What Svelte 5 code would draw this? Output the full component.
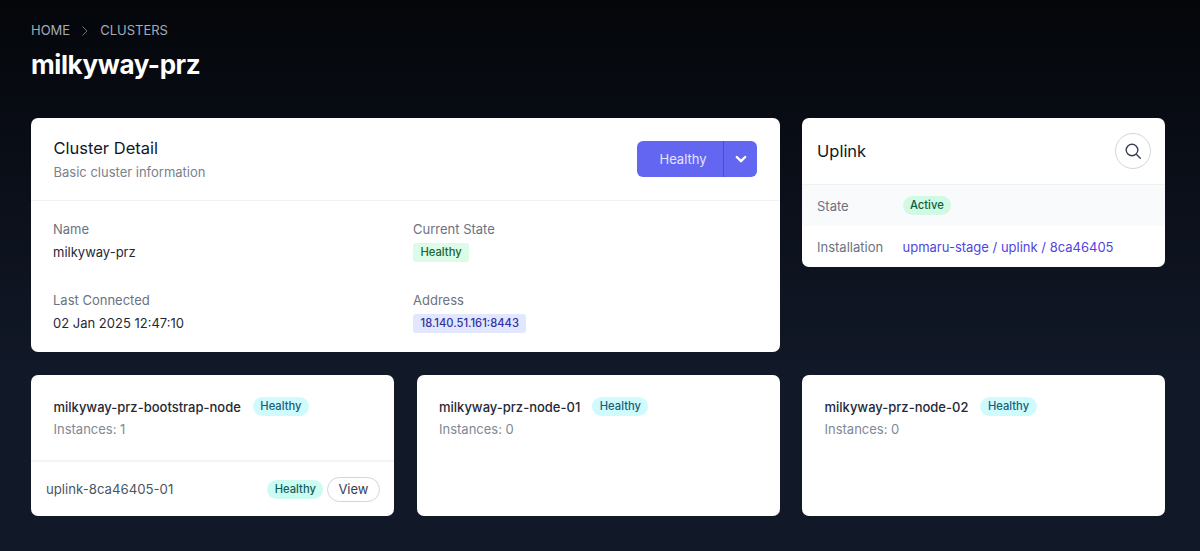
<script>
  const nodes = [
    { name: 'milkyway-prz-bootstrap-node', count: 1, instance: 'uplink-8ca46405-01' },
    { name: 'milkyway-prz-node-01', count: 0 },
    { name: 'milkyway-prz-node-02', count: 0 }
  ];
</script>

<div class="page">
  <nav class="crumbs">
    <span>HOME</span>
    <svg width="8" height="12" viewBox="0 0 8 12" fill="none" stroke="#6b7280" stroke-width="1"><path d="M1.500 1.500 6 6l-4.500 4.500" /></svg>
    <span>CLUSTERS</span>
  </nav>
  <h1>milkyway-prz</h1>

  <div class="grid">
    <section class="card detail">
      <header class="detail-head">
        <div>
          <h2>Cluster Detail</h2>
          <p>Basic cluster information</p>
        </div>
        <div class="split">
          <span class="split-label">Healthy</span>
          <span class="split-arrow">
            <svg width="14" height="14" viewBox="0 0 14 14" fill="none" stroke="#fff" stroke-width="2.400" stroke-linecap="round" stroke-linejoin="round"><path d="M2.800 5 7 9.200 11.200 5" /></svg>
          </span>
        </div>
      </header>
      <div class="fields">
        <div class="field">
          <div class="label">Name</div>
          <div class="value">milkyway-prz</div>
        </div>
        <div class="field">
          <div class="label">Current State</div>
          <span class="tag green">Healthy</span>
        </div>
        <div class="field">
          <div class="label">Last Connected</div>
          <div class="value">02 Jan 2025 12:47:10</div>
        </div>
        <div class="field">
          <div class="label">Address</div>
          <span class="tag indigo">18.140.51.161:8443</span>
        </div>
      </div>
    </section>

    <section class="card uplink">
      <header class="uplink-head">
        <h2>Uplink</h2>
        <span class="search">
          <svg width="18" height="18" viewBox="0 0 18 18" fill="none" stroke="#374151" stroke-width="1.400" stroke-linecap="round"><circle cx="8" cy="8" r="5.800" /><path d="m12.300 12.300 4 4" /></svg>
        </span>
      </header>
      <div class="row shaded">
        <span class="row-label">State</span>
        <span class="pill emerald">Active</span>
      </div>
      <div class="row">
        <span class="row-label">Installation</span>
        <span class="link">upmaru-stage / uplink / 8ca46405</span>
      </div>
    </section>

    {#each nodes as node}
      <section class="card node">
        <div class="node-head">
          <div class="node-title">
            <span class="node-name">{node.name}</span>
            <span class="pill cyan">Healthy</span>
          </div>
          <div class="node-count">Instances: {node.count}</div>
        </div>
        {#if node.instance}
          <div class="instance">
            <span class="instance-name">{node.instance}</span>
            <div class="instance-actions">
              <span class="pill teal">Healthy</span>
              <span class="view">View</span>
            </div>
          </div>
        {/if}
      </section>
    {/each}
  </div>
</div>

<style>
  :global(body) {
    margin: 0;
    background: #111827;
  }
  .page {
    box-sizing: border-box;
    height: 551px;
    overflow: hidden;
    padding: 22px 35px 0 31px;
    font-family: Inter, "Liberation Sans", sans-serif;
    background: linear-gradient(to bottom, #04060a 0, #111827 370px);
  }
  .crumbs {
    display: flex;
    align-items: center;
    gap: 11px;
    height: 17px;
    font-size: 13px;
    line-height: 17px;
    color: #a3abb8;
  }
  h1 {
    margin: 7px 0 0;
    font-size: 26px;
    line-height: 38px;
    font-weight: 700;
    letter-spacing: -0.4px;
    color: #fff;
  }
  .grid {
    display: grid;
    grid-template-columns: repeat(3, 1fr);
    gap: 23px 22.500px;
    margin-top: 34px;
    align-items: start;
  }
  .card {
    background: #fff;
    border-radius: 7px;
    overflow: hidden;
  }
  .detail {
    grid-column: span 2;
    height: 234px;
  }
  .detail-head {
    display: flex;
    justify-content: space-between;
    align-items: center;
    height: 82px;
    padding: 0 22.500px;
    border-bottom: 1px solid #f0f1f3;
  }
  h2 {
    margin: 0;
    font-size: 16.500px;
    line-height: 24px;
    font-weight: 430;
    color: #111827;
  }
  .detail-head p {
    margin: 2px 0 0;
    font-size: 13px;
    line-height: 20px;
    color: #7a818e;
  }
  .split {
    display: flex;
    height: 36px;
    border-radius: 6px;
    background: #6366f1;
    font-size: 13px;
    font-weight: 400;
  }
  .split-label {
    display: flex;
    align-items: center;
    justify-content: center;
    box-sizing: border-box;
    width: 87px;
    padding-left: 6px;
    color: #e0e7ff;
    border-right: 1px solid #4f46e5;
  }
  .split-arrow {
    display: flex;
    align-items: center;
    justify-content: center;
    width: 33px;
  }
  .fields {
    display: grid;
    grid-template-columns: 360px 1fr;
    row-gap: 26px;
    padding: 18px 22px 0;
  }
  .label {
    font-size: 13px;
    line-height: 20px;
    color: #6b7280;
  }
  .value {
    margin-top: 1px;
    font-size: 13px;
    line-height: 24px;
    color: #1f2937;
  }
  .tag {
    display: inline-block;
    margin-top: 4px;
    padding: 0 7.500px;
    height: 19px;
    border-radius: 3px;
    font-size: 11.200px;
    line-height: 19px;
    font-weight: 450;
  }
  .green {
    background: #dcfce7;
    color: #166534;
  }
  .indigo {
    background: #e0e7ff;
    color: #3730a3;
  }
  .uplink-head {
    display: flex;
    justify-content: space-between;
    align-items: center;
    height: 66px;
    padding: 0 14.500px 0 15px;
    border-bottom: 1px solid #f0f1f3;
  }
  .search {
    display: flex;
    align-items: center;
    justify-content: center;
    box-sizing: border-box;
    width: 36px;
    height: 36px;
    border-radius: 50%;
    border: 1px solid #d1d5db;
  }
  .row {
    display: flex;
    align-items: center;
    height: 41px;
    padding: 0 15px;
    font-size: 13px;
  }
  .shaded {
    background: #f9fafb;
  }
  .row-label {
    width: 85.500px;
    color: #6b7280;
  }
  .link {
    color: #5145e0;
  }
  .pill {
    display: inline-block;
    height: 19px;
    padding: 0 7.500px;
    border-radius: 10px;
    font-size: 11.200px;
    line-height: 19px;
    font-weight: 450;
  }
  .emerald {
    background: #d1fae5;
    color: #065f46;
  }
  .cyan {
    background: #cffafe;
    color: #155e75;
  }
  .teal {
    background: #ccfbf1;
    color: #115e59;
  }
  .node {
    height: 141px;
  }
  .node-head {
    height: 85px;
    padding: 22px 22.500px 0;
    box-sizing: border-box;
  }
  .node-title {
    display: flex;
    align-items: center;
    gap: 12px;
    height: 19px;
  }
  .node-name {
    font-size: 13px;
    font-weight: 450;
    color: #1f2937;
  }
  .node-count {
    margin-top: 3px;
    font-size: 13px;
    line-height: 20px;
    color: #808896;
  }
  .instance {
    display: flex;
    justify-content: space-between;
    align-items: center;
    height: 54px;
    padding: 0 14.500px 0 15px;
    border-top: 2px solid #f3f4f6;
    font-size: 13.200px;
    color: #4b5563;
  }
  .instance-actions {
    display: flex;
    align-items: center;
    gap: 4px;
  }
  .view {
    box-sizing: border-box;
    height: 25px;
    padding: 0 10px;
    border: 1px solid #d1d5db;
    border-radius: 13px;
    font-size: 13px;
    line-height: 23px;
    color: #374151;
  }
</style>
